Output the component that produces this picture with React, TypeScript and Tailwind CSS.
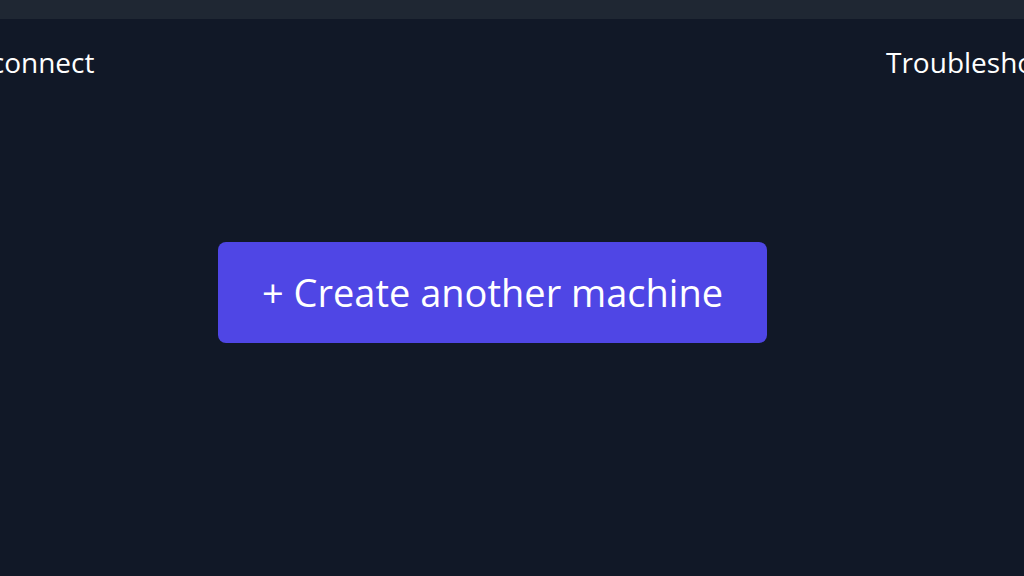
import React from 'react';

const App: React.FC = () => {
  return (
    <div
      className="w-[1024px] h-[576px] overflow-hidden bg-[#111827] text-white flex flex-col"
      style={{ fontFamily: '"Open Sans", "Noto Sans", sans-serif' }}
    >
      {/* top bar */}
      <div className="h-[19px] shrink-0 bg-[#1f2733]" />

      {/* nav row, cut off at both edges */}
      <div className="flex justify-between items-center mt-[29px] -ml-[50px] -mr-[37px] text-[28px] leading-[28px]">
        <span>Disconnect</span>
        <span>Troubleshoot</span>
      </div>

      <div className="flex-1 flex items-start">
        <button className="mt-[166px] ml-[218px] w-[549px] h-[101px] rounded-[8px] bg-[#4f46e5] text-[38px] text-white flex items-center justify-center">
          + Create another machine
        </button>
      </div>
    </div>
  );
};

export default App;
